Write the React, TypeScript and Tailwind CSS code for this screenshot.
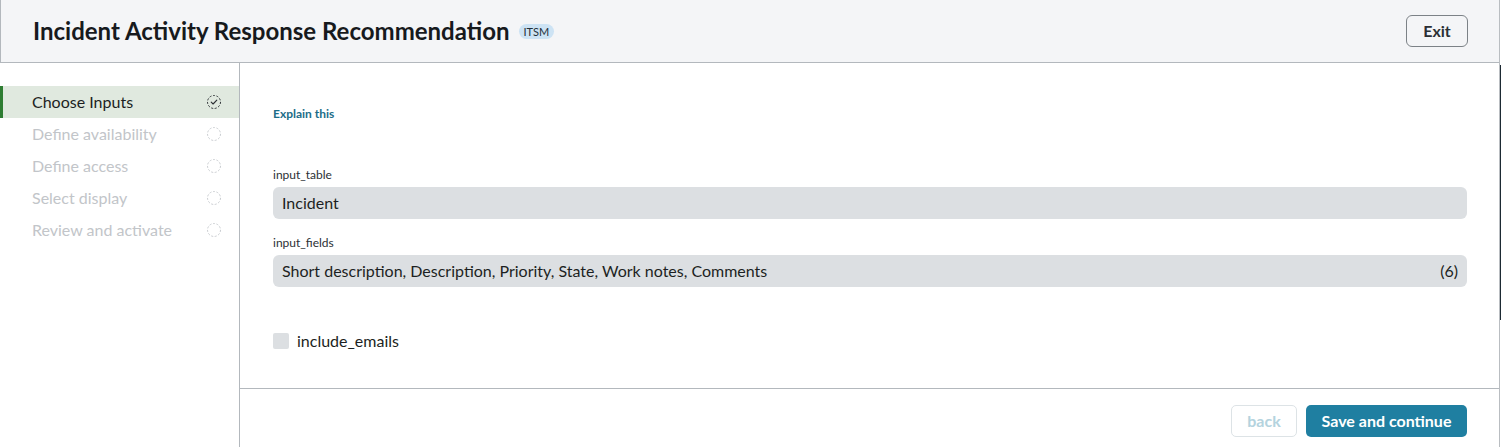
import React from "react";

type Step = { label: string; done?: boolean; active?: boolean };

const steps: Step[] = [
  { label: "Choose Inputs", active: true, done: true },
  { label: "Define availability" },
  { label: "Define access" },
  { label: "Select display" },
  { label: "Review and activate" },
];

function StepIcon({ done }: { done?: boolean }) {
  return (
    <svg width="16" height="16" viewBox="0 0 16 16" fill="none">
      <circle
        cx="8"
        cy="8"
        r="6.5"
        stroke={done ? "#2b2f33" : "#c9ccd0"}
        strokeWidth="1"
        strokeDasharray="2 1.6"
      />
      {done && (
        <path d="M5.2 8.2l1.9 1.8 3.7-3.9" stroke="#2b2f33" strokeWidth="1.1" strokeLinecap="round" strokeLinejoin="round" />
      )}
    </svg>
  );
}

export default function App() {
  return (
    <div className="flex h-[447px] w-[1501px] overflow-hidden bg-white font-['Lato','Liberation_Sans',sans-serif]">
      <div className="flex min-w-0 flex-1 flex-col border-r border-[#b9bdc1]">
        {/* header */}
        <header className="flex h-[63px] shrink-0 items-center justify-between border-b border-l border-[#b3b8bd] bg-[#f4f5f7] pl-[32px] pr-[31px]">
          <div className="flex items-center gap-[9px]">
            <h1 className="text-[24px] font-bold leading-none text-[#171a1d]">
              Incident Activity Response Recommendation
            </h1>
            <span className="mt-[1px] rounded-full bg-[#cde3f4] px-[5px] py-[1px] text-[11px] leading-[13px] text-[#24303a]">
              ITSM
            </span>
          </div>
          <button className="h-[32px] w-[62px] rounded-[6px] border border-[#7c8287] text-[16px] font-bold text-[#2b3035]">
            Exit
          </button>
        </header>

        <div className="flex min-h-0 flex-1">
          {/* steps */}
          <nav className="w-[240px] shrink-0 border-r border-[#b3b8bd] pt-[23px]">
            {steps.map((s) => (
              <div
                key={s.label}
                className={`flex h-[32px] items-center justify-between pr-[17px] text-[16px] ${
                  s.active
                    ? "border-l-[3px] border-[#2e7d32] bg-[#e0e9df] pl-[29px] text-[#1c1f22]"
                    : "pl-[32px] text-[#c2c5c9]"
                }`}
              >
                <span>{s.label}</span>
                <StepIcon done={s.done} />
              </div>
            ))}
          </nav>

          {/* form */}
          <main className="flex min-w-0 flex-1 flex-col">
            <div className="flex-1 border-b border-[#b3b8bd] pl-[33px] pr-[32px] pt-[37px]">
              <a className="text-[12px] font-bold text-[#1c6d88]">Explain this</a>

              <div className="mt-[42px]">
                <div className="text-[12px] leading-[18px] text-[#2b3035]">input_table</div>
                <div className="mt-[3px] flex h-[32px] items-center rounded-[6px] bg-[#dcdfe2] px-[9px] text-[16px] text-[#1c1f22]">
                  Incident
                </div>
              </div>

              <div className="mt-[15px]">
                <div className="text-[12px] leading-[18px] text-[#2b3035]">input_fields</div>
                <div className="mt-[3px] flex h-[32px] items-center justify-between rounded-[6px] bg-[#dcdfe2] px-[9px] text-[16px] text-[#1c1f22]">
                  <span>Short description, Description, Priority, State, Work notes, Comments</span>
                  <span>(6)</span>
                </div>
              </div>

              <label className="mt-[42px] flex items-center gap-[8px] text-[16px] text-[#1c1f22]">
                <span className="h-[16px] w-[16px] rounded-[2px] bg-[#dcdfe2]" />
                include_emails
              </label>
            </div>

            <footer className="flex h-[58px] shrink-0 items-start justify-end gap-[9px] pr-[32px] pt-[16px]">
              <button className="h-[32px] w-[66px] rounded-[5px] border border-[#dde3e6] text-[16px] font-bold text-[#b4d3de]">
                back
              </button>
              <button className="h-[32px] w-[161px] rounded-[5px] bg-[#1f7fa1] text-[16px] font-bold text-white">
                Save and continue
              </button>
            </footer>
          </main>
        </div>
      </div>
      <div className="flex w-[1px] flex-col">
        <div className="mt-[65px] h-[255px] bg-[#1d2a33]" />
      </div>
    </div>
  );
}
